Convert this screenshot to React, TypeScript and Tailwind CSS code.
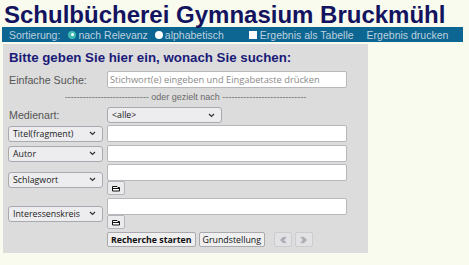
import React from 'react'

const Chevron = () => (
  <svg width="7" height="5" viewBox="0 0 7 5" className="shrink-0">
    <path d="M1 1 L3.5 3.5 L6 1" fill="none" stroke="#333" strokeWidth="1.2" />
  </svg>
)

const Select = ({ label, w = 'w-[95px]' }: { label: string; w?: string }) => (
  <div className={`${w} h-[16px] flex items-center justify-between pl-[4px] pr-[6px] bg-[#ededf0] border border-[#a9a9b0] rounded-[3px] text-[8.8px] leading-[12px] font-medium text-[#1b1b1b] font-['Open_Sans',sans-serif]`}>
    <span>{label}</span>
    <Chevron />
  </div>
)

const Input = ({ placeholder }: { placeholder?: string }) => (
  <div className="w-[240px] h-[17px] bg-white border border-[#b8b8bc] rounded-[2px] flex items-center pl-[2px] text-[9.3px] leading-[12px] text-[#8a8a8a] font-['Open_Sans',sans-serif] whitespace-nowrap">
    {placeholder}
  </div>
)

const TrayButton = () => (
  <div className="w-[18px] h-[14px] bg-[#ebebee] border border-[#b5b5ba] rounded-[2px] flex items-center justify-center">
    <svg width="10" height="7" viewBox="0 0 10 7">
      <path d="M1.5 1.5 H6 L7 2.5 H8.5 V6 H1.5 Z" fill="#fff" stroke="#111" strokeWidth="1" />
      <path d="M1.5 3.5 H8.5" stroke="#111" strokeWidth="1" />
    </svg>
  </div>
)

const NavButton = ({ dir }: { dir: 'l' | 'r' }) => (
  <div className="w-[18px] h-[15px] bg-[#e2e2e4] border border-[#cdcdd0] rounded-[2px] flex items-center justify-center">
    <svg width="8" height="8" viewBox="0 0 8 8">
      {dir === 'l' ? (
        <path d="M5 1 L2 4 L5 7 M7 1 L4 4 L7 7" fill="none" stroke="#a8a8b2" strokeWidth="1.3" />
      ) : (
        <path d="M1 1 L4 4 L1 7 M3 1 L6 4 L3 7" fill="none" stroke="#a8a8b2" strokeWidth="1.3" />
      )}
    </svg>
  </div>
)

const Label = ({ children }: { children: React.ReactNode }) => (
  <div className="w-[99px] pl-[1px] text-[10.7px] leading-[12px] text-[#555]">{children}</div>
)

const App = () => {
  const dashes = '-'.repeat(28)
  return (
    <div className="w-[469px] h-[265px] bg-[#f8fbee] font-['Liberation_Sans',Arial,sans-serif] overflow-hidden">
      {/* TITLE */}
      <div className="h-[27px] pt-[2px] pl-[4px] leading-[25px] text-[24px] font-bold text-[#131360]">
        Schulbücherei Gymnasium Bruckmühl
      </div>
      {/* SORT BAR */}
      <div className="ml-[2px] w-[461px] h-[15px] bg-[#0d6592] flex items-center text-[10.5px] leading-[12px] text-[#bcd2de]">
        <span className="ml-[7px]">Sortierung:</span>
        <span className="ml-[8px] w-[8px] h-[8px] rounded-full bg-[#3fbcb4] flex items-center justify-center">
          <span className="w-[3px] h-[3px] rounded-full bg-white" />
        </span>
        <span className="ml-[2px]">nach Relevanz</span>
        <span className="ml-[7px] w-[8px] h-[8px] rounded-full bg-white" />
        <span className="ml-[2px]">alphabetisch</span>
        <span className="ml-[25px] w-[8px] h-[8px] bg-white" />
        <span className="ml-[3px]">Ergebnis als Tabelle</span>
        <span className="ml-[13px]">Ergebnis drucken</span>
      </div>
      {/* SEARCH PANEL */}
      <div className="ml-[3px] mt-[2px] w-[365px] bg-[#dcdcdc] pl-[5px] pt-[6px] pb-[6px]">
        <div className="pl-[1px] leading-[16px] text-[13.3px] font-bold text-[#1a1a78]">
          Bitte geben Sie hier ein, wonach Sie suchen:
        </div>
        <div className="mt-[5px] flex items-center">
          <Label>Einfache Suche:</Label>
          <Input placeholder="Stichwort(e) eingeben und Eingabetaste drücken" />
        </div>
        <div className="mt-[3px] pr-[5px] leading-[12px] text-center text-[9px] text-[#6a6a6a] whitespace-nowrap">
          {dashes} oder gezielt nach {dashes}
        </div>
        <div className="mt-[4px] flex items-center">
          <Label>Medienart:</Label>
          <Select label="<alle>" w="w-[115px]" />
        </div>
        <div className="mt-[2px] flex items-center">
          <div className="w-[99px]"><Select label="Titel(fragment)" /></div>
          <Input />
        </div>
        <div className="mt-[3px] flex items-center">
          <div className="w-[99px]"><Select label="Autor" /></div>
          <Input />
        </div>
        <div className="mt-[2px] flex items-center">
          <div className="w-[99px]"><Select label="Schlagwort" /></div>
          <div className="flex flex-col">
            <Input />
            <TrayButton />
          </div>
        </div>
        <div className="mt-[3px] flex items-center">
          <div className="w-[99px]"><Select label="Interessenskreis" /></div>
          <div className="flex flex-col">
            <Input />
            <TrayButton />
          </div>
        </div>
        <div className="mt-[3px] ml-[99px] flex items-center font-['Open_Sans',sans-serif] text-[8.8px] leading-[12px] text-[#111]">
          <div className="h-[15px] px-[3px] flex items-center bg-[#efeff0] border border-[#a9a9ae] rounded-[2px] font-bold">
            Recherche starten
          </div>
          <div className="ml-[3px] h-[15px] px-[3px] flex items-center bg-[#efeff0] border border-[#a9a9ae] rounded-[2px] font-medium">
            Grundstellung
          </div>
          <div className="ml-[9px] flex gap-[3px]">
            <NavButton dir="l" />
            <NavButton dir="r" />
          </div>
        </div>
      </div>
    </div>
  )
}

export default App
